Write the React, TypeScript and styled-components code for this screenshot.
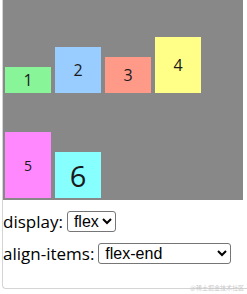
import * as React from "react"
import styled, { createGlobalStyle } from "styled-components"

const GlobalStyle = createGlobalStyle`
  html, body {
    margin: 0;
    padding: 0;
    background: #ffffff;
    overflow: hidden;
  }
  body {
    font-family: "Open Sans", "Noto Sans CJK SC", sans-serif;
    color: #000;
  }
`

type BoxData = {
  label: string
  color: string
  height: number
  size: number
}

const boxes: BoxData[] = [
  { label: "1", color: "#88f599", height: 26, size: 16 },
  { label: "2", color: "#99ccff", height: 46, size: 16 },
  { label: "3", color: "#ff9988", height: 36, size: 16 },
  { label: "4", color: "#ffff88", height: 56, size: 16 },
  { label: "5", color: "#ff88ff", height: 66, size: 14 },
  { label: "6", color: "#88ffff", height: 46, size: 29 },
]

export default function App() {
  const [display, setDisplay] = React.useState("flex")
  const [align, setAlign] = React.useState("flex-end")

  return (
    <>
      <GlobalStyle />
      <Page>
        <Frame>
          <FlexBox $display={display} $align={align}>
            {boxes.map(b => (
              <Item key={b.label} $bg={b.color} $h={b.height} $size={b.size}>
                {b.label}
              </Item>
            ))}
          </FlexBox>
          <Controls>
            <Row>
              <Label>display:</Label>
              <Select $w={49} value={display} onChange={e => setDisplay(e.target.value)}>
                <option>flex</option>
                <option>block</option>
              </Select>
            </Row>
            <Row>
              <Label>align-items:</Label>
              <Select $w={133} value={align} onChange={e => setAlign(e.target.value)}>
                <option>flex-start</option>
                <option>flex-end</option>
                <option>center</option>
                <option>baseline</option>
                <option>stretch</option>
              </Select>
            </Row>
          </Controls>
        </Frame>
        <Watermark>@稀土掘金技术社区</Watermark>
      </Page>
    </>
  )
}

const Page = styled.div`
  position: relative;
  width: 247px;
  height: 294px;
  padding-left: 2px;
  box-sizing: border-box;
  overflow: hidden;
`

const Frame = styled.div`
  width: 245px;
  border: 1px solid #d4d4d4;
  border-top: none;
  border-right: none;
  border-radius: 0 0 0 4px;
  box-sizing: border-box;
`

const FlexBox = styled.div<{ $display: string; $align: string }>`
  display: ${p => p.$display};
  flex-wrap: wrap;
  align-items: ${p => p.$align};
  width: 240px;
  height: 200px;
  background: #888888;
`

const Item = styled.div<{ $bg: string; $h: number; $size: number }>`
  display: flex;
  align-items: center;
  justify-content: center;
  width: 46px;
  height: ${p => p.$h}px;
  margin: 2px;
  background: ${p => p.$bg};
  font-family: "Open Sans", "Liberation Sans", sans-serif;
  font-size: ${p => p.$size}px;
  color: #1a1a1a;
`

const Controls = styled.div`
  padding: 5px 0 19px 0;
`

const Row = styled.div`
  display: flex;
  align-items: center;
  height: 32px;
`

const Label = styled.span`
  font-size: 17px;
  margin-right: 4px;
`

const Select = styled.select<{ $w: number }>`
  width: ${p => p.$w}px;
  height: 21px;
  font-family: "Liberation Sans", sans-serif;
  font-size: 16px;
  border: 1px solid #767676;
  border-radius: 3px;
  background: #fff;
  color: #000;
  padding: 0 0 0 2px;
`

const Watermark = styled.div`
  position: absolute;
  right: 3px;
  top: 284px;
  font-size: 6px;
  line-height: 8px;
  color: #c8c8c8;
  font-family: "Noto Sans CJK SC", sans-serif;
`
